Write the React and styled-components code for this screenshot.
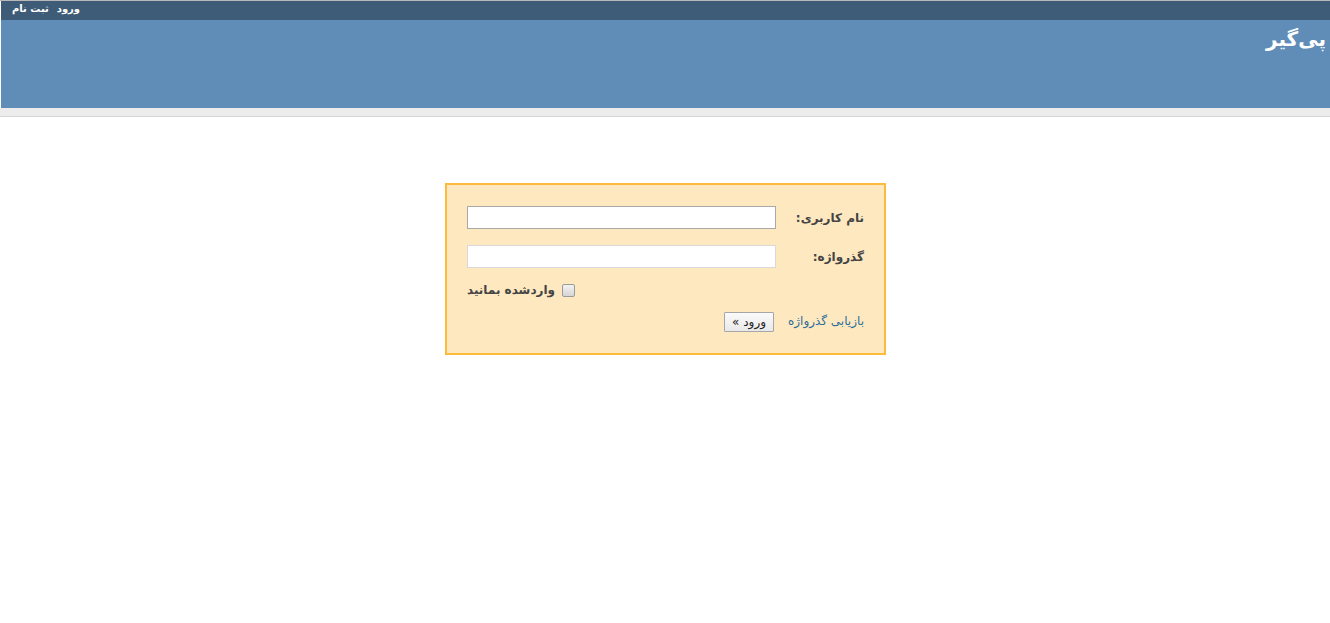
import React from "react";
import styled, { createGlobalStyle } from "styled-components";

const Global = createGlobalStyle`
  html, body { margin: 0; padding: 0; background: #fff; }
  body { font-family: "DejaVu Sans", "Noto Sans", sans-serif; font-size: 12px; color: #444; }
  * { box-sizing: border-box; }
`;

const Page = styled.div`
  direction: rtl;
  border-top: 1px solid #b8b8b8;
`;

const TopBar = styled.div`
  margin-left: 1px;
  height: 19px;
  background: #3e5b77;
  display: flex;
  direction: ltr;
  align-items: center;
  padding-left: 11px;
  gap: 8px;
`;

const TopLink = styled.a`
  color: #fff;
  font-weight: bold;
  font-size: 10px;
  text-decoration: none;
  direction: rtl;
  line-height: 15px;
  padding-bottom: 4px;
`;

const Header = styled.div`
  margin-left: 1px;
  height: 88px;
  background: #608db8;
  display: flex;
  justify-content: flex-start;
  padding: 4px 4px 0 0;
`;

const Title = styled.h1`
  margin: 0;
  color: #fff;
  font-size: 20px;
  font-weight: bold;
  line-height: 30px;
`;

const SubBar = styled.div`
  height: 9px;
  background: #ececec;
  border-bottom: 1px solid #d6d6d6;
`;

const Main = styled.div`
  display: flex;
  justify-content: center;
  padding-top: 66px;
  direction: ltr;
`;

const Box = styled.form`
  direction: rtl;
  width: 441px;
  height: 172px;
  margin-left: 1px;
  background: #fee8c0;
  border: 2px solid #fcbb3c;
  padding: 21px 20px 0 20px;
  display: grid;
  grid-template-columns: 88px 309px;
  grid-template-rows: 23px 23px 12px 20px;
  row-gap: 16px;
  align-items: center;
`;

const Label = styled.label`
  font-weight: bold;
  color: #444;
  font-size: 12px;
  text-align: right;
`;

const Input = styled.input`
  width: 309px;
  height: 23px;
  border: 1px solid ${(p) => (p.$focus ? "#a9a9a9" : "#d9d9d9")};
  background: #fff;
  padding: 0 3px;
  font-family: inherit;
  outline: none;
`;

const CheckRow = styled.div`
  grid-column: 2;
  display: flex;
  justify-content: flex-end;
  align-items: center;
`;

const CheckLabel = styled.label`
  display: flex;
  align-items: center;
  gap: 7px;
  font-weight: bold;
  color: #444;
  font-size: 12px;
`;

const Check = styled.span`
  width: 13px;
  height: 13px;
  border: 1px solid #9a9a9a;
  border-radius: 2px;
  background: linear-gradient(#f2f2f2, #d6d6d6);
  display: inline-block;
`;

const ForgotLink = styled.a`
  color: #2b6e9c;
  font-size: 12px;
  text-decoration: none;
  text-align: right;
  padding-bottom: 2px;
`;

const ButtonCell = styled.div`
  display: flex;
  justify-content: flex-start;
  padding-right: 2px;
`;

const Button = styled.button`
  height: 20px;
  padding: 0 7px;
  border: 1px solid #a6a6a6;
  background: linear-gradient(#fafafa, #e9e9e9);
  font-family: inherit;
  font-size: 12px;
  color: #222;
  direction: rtl;
  border-radius: 1px;
  line-height: 18px;
`;

export default function App() {
  return (
    <>
      <Global />
      <Page>
        <TopBar>
          <TopLink href="#">ثبت نام</TopLink>
          <TopLink href="#">ورود</TopLink>
        </TopBar>
        <Header>
          <Title>پی‌گیر</Title>
        </Header>
        <SubBar />
        <Main>
          <Box>
            <Label>نام کاربری:</Label>
            <Input $focus type="text" />
            <Label>گذرواژه:</Label>
            <Input type="password" />
            <CheckRow>
              <CheckLabel>
                <Check />
                واردشده بمانید
              </CheckLabel>
            </CheckRow>
            <ForgotLink href="#">بازیابی گذرواژه</ForgotLink>
            <ButtonCell>
              <Button type="button">ورود »</Button>
            </ButtonCell>
          </Box>
        </Main>
      </Page>
    </>
  );
}
